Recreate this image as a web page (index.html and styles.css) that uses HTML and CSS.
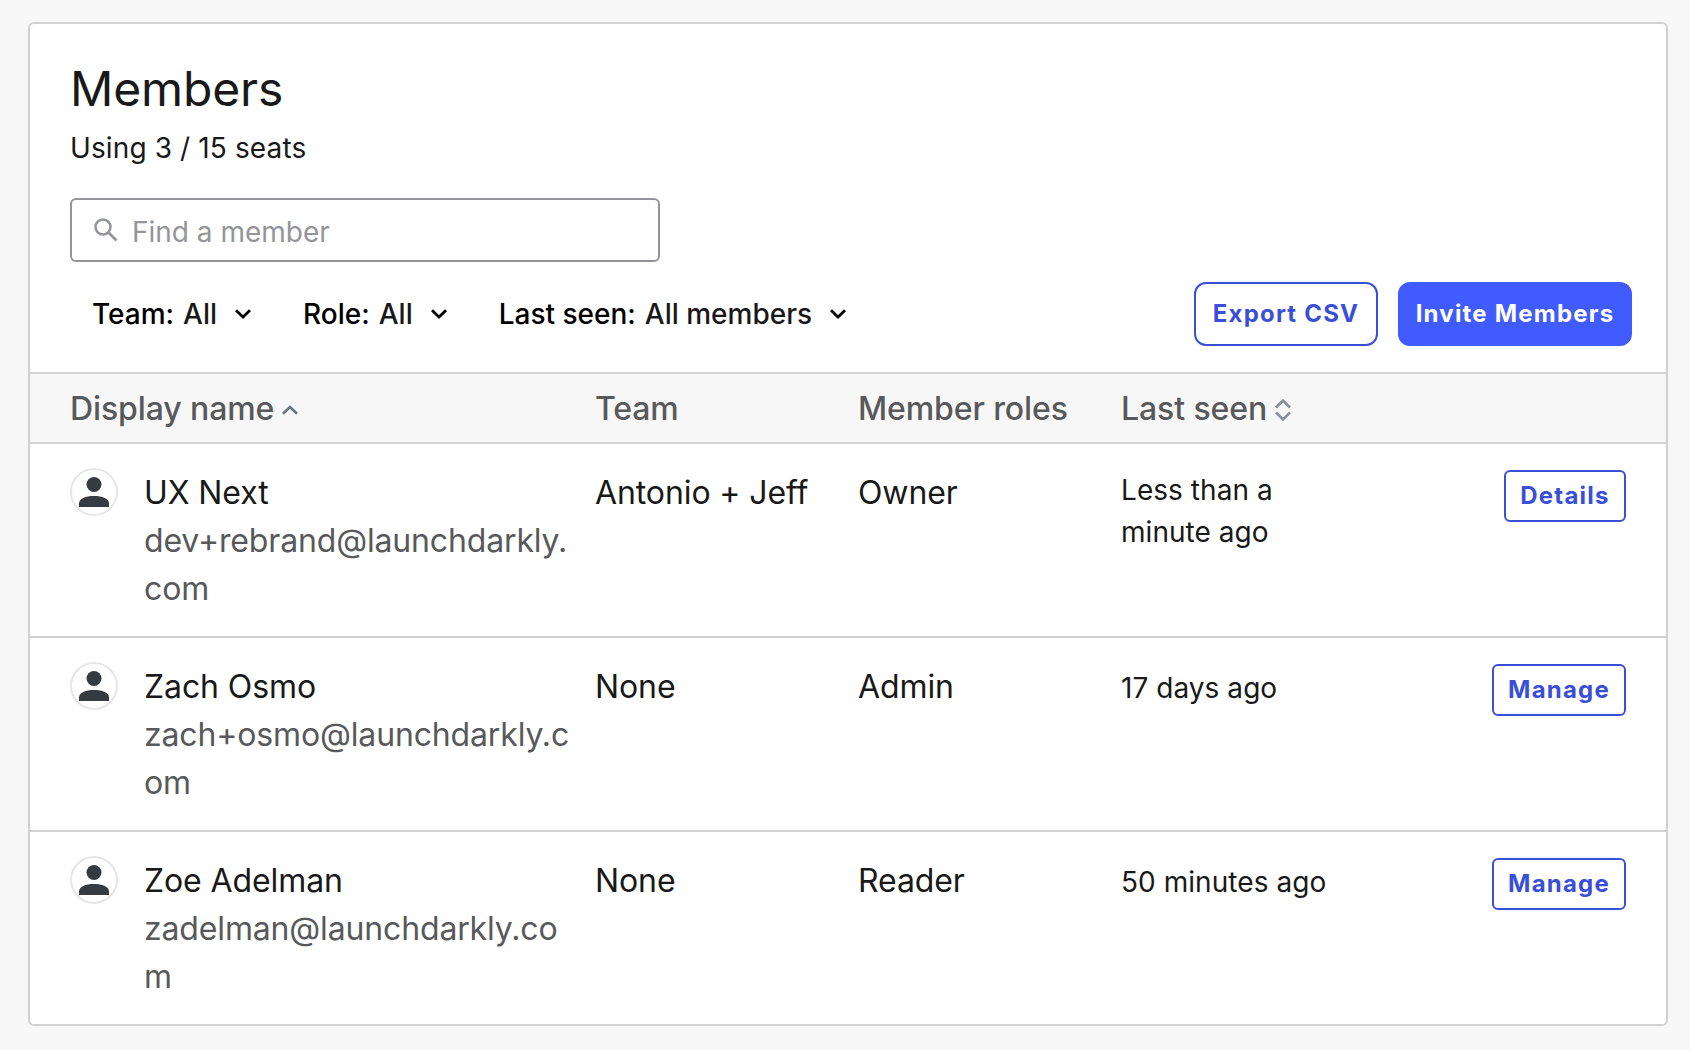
FILE: index.html
```html
<!DOCTYPE html>
<html lang="en">
<head>
<meta charset="utf-8">
<title>Members</title>
<link rel="stylesheet" href="styles.css">
</head>
<body>
<svg class="defs" width="0" height="0" aria-hidden="true">
  <symbol id="person" viewBox="0 0 30 30">
    <circle cx="15" cy="7.5" r="7.5"/>
    <path d="M0 30v-3.500C0 21.500 6.500 19 15 19s15 2.500 15 7.500V30z"/>
  </symbol>
  <symbol id="chevron" viewBox="0 0 16 10">
    <path d="M1 1.200 8 8l7-6.800" fill="none" stroke="currentColor" stroke-width="2.800"/>
  </symbol>
</svg>
<main class="card">
  <header class="top">
    <h1 class="title">Members</h1>
    <p class="seats">Using 3 / 15 seats</p>
    <label class="search">
      <svg class="search-icon" viewBox="0 0 24 24"><circle cx="9" cy="9" r="7.500"/><path d="m14.500 14.500 8 8"/></svg>
      <input class="search-input" type="text" placeholder="Find a member">
    </label>
    <div class="toolbar">
      <div class="filters">
        <button class="filter"><span class="key">Team:</span><span>All</span><svg class="chev"><use href="#chevron"/></svg></button>
        <button class="filter"><span class="key">Role:</span><span>All</span><svg class="chev"><use href="#chevron"/></svg></button>
        <button class="filter"><span class="key">Last seen:</span><span>All members</span><svg class="chev"><use href="#chevron"/></svg></button>
      </div>
      <div class="actions">
        <button class="btn export">Export CSV</button>
        <button class="btn invite">Invite Members</button>
      </div>
    </div>
  </header>
  <section class="table">
    <div class="row head">
      <div class="th">Display name<svg class="sort-up" viewBox="0 0 16 10"><path d="M1 8.800 8 2l7 6.800"/></svg></div>
      <div class="th">Team</div>
      <div class="th">Member roles</div>
      <div class="th">Last seen<svg class="sort-both" viewBox="0 0 16 22"><path d="M1 8.500 8 1.600l7 6.900M1 13.500 8 20.400l7-6.900"/></svg></div>
      <div></div>
    </div>
    <div class="row">
      <div class="member"><span class="avatar"><svg><use href="#person"/></svg></span><div class="who"><div>UX Next</div><div class="email">dev+rebrand@launchdarkly.<wbr>com</div></div></div>
      <div class="cell">Antonio + Jeff</div>
      <div class="cell">Owner</div>
      <div class="seen wrapped">Less than a minute ago</div>
      <div class="cell-action"><button class="btn small details">Details</button></div>
    </div>
    <div class="row">
      <div class="member"><span class="avatar"><svg><use href="#person"/></svg></span><div class="who"><div>Zach Osmo</div><div class="email">zach+osmo@launchdarkly.c<wbr>om</div></div></div>
      <div class="cell">None</div>
      <div class="cell">Admin</div>
      <div class="seen">17 days ago</div>
      <div class="cell-action"><button class="btn small manage">Manage</button></div>
    </div>
    <div class="row">
      <div class="member"><span class="avatar"><svg><use href="#person"/></svg></span><div class="who"><div>Zoe Adelman</div><div class="email">zadelman@launchdarkly.co<wbr>m</div></div></div>
      <div class="cell">None</div>
      <div class="cell">Reader</div>
      <div class="seen">50 minutes ago</div>
      <div class="cell-action"><button class="btn small manage">Manage</button></div>
    </div>
  </section>
</main>
</body>
</html>
```
FILE: styles.css
```css
* { box-sizing: border-box; }
body {
  margin: 0;
  padding: 22px 22px 24px 28px;
  background: #f7f7f7;
  color: #191919;
  font: 400 32px/48px Inter, sans-serif;
  letter-spacing: -0.1px;
}
.defs { position: absolute; }
button, input { font: inherit; color: inherit; background: none; border: 0; padding: 0; margin: 0; letter-spacing: inherit; }
.card {
  height: 1004px;
  border: 2px solid #d1d1d1;
  border-radius: 6px;
  background: #fff;
  overflow: hidden;
}
.top { height: 348px; padding: 35px 34px 0 40px; }
.title { margin: 0; font-size: 48px; line-height: 60px; font-weight: 400; letter-spacing: -0.15px; }
.seats { margin: 8px 0 0; font-size: 28px; line-height: 42px; letter-spacing: 0.12px; }
.search {
  display: flex;
  align-items: center;
  width: 590px;
  height: 64px;
  margin-top: 29px;
  padding-left: 22px;
  border: 2px solid #939598;
  border-radius: 6px;
}
.search-icon { width: 24px; height: 24px; margin-right: 14px; fill: none; stroke: #939598; stroke-width: 2.6; }
.search-input { flex: 1; height: 60px; padding-top: 4px; font-size: 28px; outline: 0; letter-spacing: 0; }
.search-input::placeholder { color: #939598; opacity: 1; }
.toolbar { display: flex; justify-content: space-between; margin-top: 20px; }
.filters { display: flex; gap: 52px; padding-left: 22px; }
.filter { display: flex; align-items: center; font-size: 28px; font-weight: 500; height: 64px; letter-spacing: 0; }
.key { margin-right: 9px; color: #000; }
.chev { width: 16px; height: 10px; margin-left: 18px; color: #000; }
.actions { display: flex; gap: 20px; }
.btn {
  height: 64px;
  border: 2px solid #3a4fd9;
  border-radius: 12px;
  color: #3a4fd9;
  font-size: 24px;
  font-weight: 700;
  letter-spacing: 1.2px;
  line-height: 30px;
}
.export { width: 184px; }
.invite { width: 234px; background: #405bff; border-color: #405bff; color: #fff; }
.row {
  display: grid;
  grid-template-columns: 525px 263px 263px 240px 1fr;
  height: 194px;
  padding: 24px 40px 0;
  border-top: 2px solid #d1d1d1;
}
.row.head { height: 70px; padding-top: 11px; background: #f7f7f7; color: #58595b; font-weight: 500; }
.th svg { fill: none; stroke: #6c757f; stroke-width: 2.6; }
.sort-up { width: 16px; height: 10px; margin-left: 8px; vertical-align: 5px; }
.th .sort-both { width: 16px; height: 22px; margin-left: 8px; vertical-align: -1px; stroke: #87909a; }
.member { display: flex; gap: 26px; }
.avatar { display: flex; align-items: center; justify-content: center; width: 48px; height: 48px; border: 2px solid #e6e6e6; border-radius: 50%; }
.avatar svg { width: 30px; height: 30px; fill: #363b42; }
.who { width: 432px; padding-top: 1px; }
.cell { padding-top: 1px; }
.email { color: #58595b; letter-spacing: -0.15px; }
.seen { font-size: 28px; line-height: 42px; padding-top: 5px; letter-spacing: 0.05px; }
.seen.wrapped { padding-top: 1px; width: 200px; }
.cell-action { display: flex; justify-content: flex-end; align-items: flex-start; }
.small { height: 52px; margin-top: 2px; border-radius: 6px; }
.details { width: 122px; }
.manage { width: 134px; }
```
